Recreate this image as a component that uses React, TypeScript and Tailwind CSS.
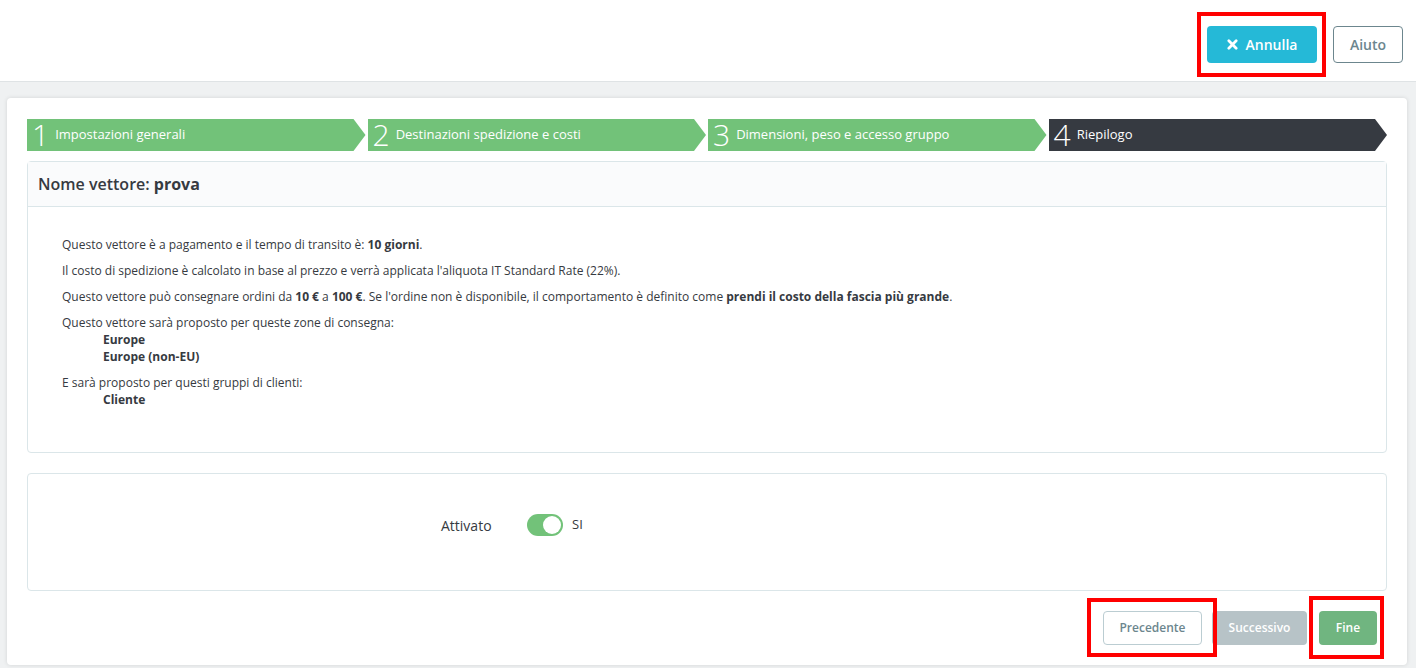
import React from 'react';

const steps = [
  { n: '1', label: 'Impostazioni generali', done: true },
  { n: '2', label: 'Destinazioni spedizione e costi', done: true },
  { n: '3', label: 'Dimensioni, peso e accesso gruppo', done: true },
  { n: '4', label: 'Riepilogo', done: false },
];

function RedMark({ className }: { className: string }) {
  return <span className={`pointer-events-none absolute border-[4px] border-[#ff0000] ${className}`} />;
}

export default function App() {
  return (
    <div className="min-h-[668px] bg-[#eff1f2] font-['Open_Sans',sans-serif] text-[#363a41]">
      {/* Toolbar */}
      <div className="flex h-[82px] items-start justify-end gap-4 border-b border-[#dfe3e5] bg-white pr-[13px] pt-[26px]">
        <div className="relative">
          <button className="flex h-[37px] w-[110px] items-center justify-center gap-2 rounded-[4px] bg-[#25b9d7] text-[14px] font-semibold text-white">
            <svg width="11" height="11" viewBox="0 0 12 12">
              <path d="M2 2 L10 10 M10 2 L2 10" stroke="white" strokeWidth="3" strokeLinecap="round" />
            </svg>
            Annulla
          </button>
          <RedMark className="-left-[10px] -right-[9px] -top-[14px] -bottom-[14px]" />
        </div>
        <button className="h-[37px] w-[70px] rounded-[4px] border border-[#6c868e] bg-white text-[14px] font-semibold text-[#6c868e]">
          Aiuto
        </button>
      </div>

      {/* Main card */}
      <div className="ml-[7px] mr-[9px] mt-4 rounded-[4px] bg-white px-5 pb-5 pt-[21px] shadow-[0_0_4px_0_rgba(0,0,0,0.12)]">
        {/* Wizard steps */}
        <div className="flex gap-[2px]">
          {steps.map((s) => (
            <div
              key={s.n}
              className={`flex h-8 flex-1 items-center gap-[6px] pl-[5px] text-white [clip-path:polygon(0_0,calc(100%-12px)_0,100%_50%,calc(100%-12px)_100%,0_100%)] ${
                s.done ? 'bg-[#72c279]' : 'bg-[#363a41]'
              }`}
            >
              <span className="text-[30px] font-light leading-none">{s.n}</span>
              <span className="text-[13px]">{s.label}</span>
            </div>
          ))}
        </div>

        {/* Summary panel */}
        <div className="mt-[10px] rounded-[4px] border border-[#dbe6e9]">
          <div className="flex h-[45px] items-center border-b border-[#dbe6e9] bg-[#fafbfc] px-[10px] text-[16px] font-semibold">
            Nome vettore:&nbsp;<b className="font-bold">prova</b>
          </div>
          <div className="px-[34px] pb-[44px] pt-[29px] text-[12px] leading-[17px]">
            <p className="mb-[9px]">
              Questo vettore è a pagamento e il tempo di transito è: <b>10 giorni</b>.
            </p>
            <p className="mb-[9px]">
              Il costo di spedizione è calcolato in base al prezzo e verrà applicata l'aliquota IT Standard Rate (22%).
            </p>
            <p className="mb-[9px]">
              Questo vettore può consegnare ordini da <b>10 €</b> a <b>100 €</b>. Se l'ordine non è disponibile, il
              comportamento è definito come <b>prendi il costo della fascia più grande</b>.
            </p>
            <p>Questo vettore sarà proposto per queste zone di consegna:</p>
            <ul className="mb-[9px] pl-[41px] font-bold">
              <li>Europe</li>
              <li>Europe (non-EU)</li>
            </ul>
            <p>E sarà proposto per questi gruppi di clienti:</p>
            <ul className="pl-[41px] font-bold">
              <li>Cliente</li>
            </ul>
          </div>
        </div>

        {/* Status panel */}
        <div className="mt-5 flex h-[118px] items-center rounded-[4px] border border-[#dbe6e9] pb-[14px] pl-[413px]">
          <span className="w-[86px] text-[14px]">Attivato</span>
          <span className="flex h-[22px] w-9 items-center justify-end rounded-full bg-[#72c279] pr-[2px]">
            <span className="h-[18px] w-[18px] rounded-full bg-white" />
          </span>
          <span className="ml-[9px] text-[13px]">SI</span>
        </div>

        {/* Footer buttons */}
        <div className="mt-5 flex items-center justify-end pr-[10px]">
          <div className="relative">
            <button className="h-[34px] w-[99px] rounded-[4px] border border-[#bbcdd2] bg-white text-[12px] font-semibold text-[#6c868e]">
              Precedente
            </button>
            <RedMark className="-left-[16px] -right-[15px] -top-[13px] -bottom-[12px]" />
          </div>
          <button className="ml-[10px] h-[34px] w-[95px] rounded-[4px] bg-[#b7c3c7] text-[12px] font-semibold text-white">
            Successivo
          </button>
          <div className="relative ml-3">
            <button className="h-[34px] w-[58px] rounded-[4px] bg-[#70b580] text-[12px] font-semibold text-white">
              Fine
            </button>
            <RedMark className="-left-[10px] -right-[7px] -top-[15px] -bottom-[14px]" />
          </div>
        </div>
      </div>
    </div>
  );
}
